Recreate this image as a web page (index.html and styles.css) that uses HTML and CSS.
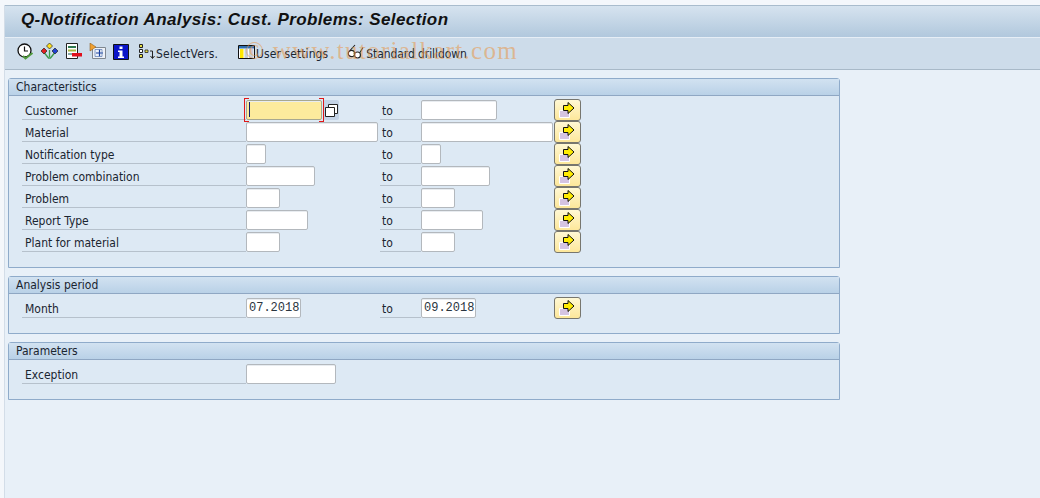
FILE: index.html
```html
<!DOCTYPE html>
<html lang="en">
<head>
<meta charset="utf-8">
<title>Q-Notification Analysis</title>
<link rel="stylesheet" href="styles.css">
</head>
<body>
<div class="window">
  <header class="titlebar"><h1>Q-Notification Analysis: Cust. Problems: Selection</h1></header>
  <nav class="toolbar">
    <span class="tool first"><svg width="17" height="17" viewBox="0 0 17 17"><circle cx="7.5" cy="7.5" r="6.5" fill="#fff" stroke="#111" stroke-width="1.3"/><path d="M7.5 3.500v4.500h3.500" fill="none" stroke="#111" stroke-width="1.200"/><path d="M6 13l2.500 2.500 7-5.500" fill="none" stroke="#4f9a3c" stroke-width="2"/></svg></span>
    <span class="tool"><svg width="17" height="17" viewBox="0 0 17 17"><path d="M8.500 7v7M3.500 10l4 5h2l4-5" fill="none" stroke="#3a9a4a" stroke-width="1.300"/><path d="M8.500 0l3 3-3 3-3-3z" fill="#ffe020" stroke="#222" stroke-width=".7"/><path d="M3 5l3 3-3 3-3-3z" fill="#e02020" stroke="#222" stroke-width=".7"/><path d="M14 5l3 3-3 3-3-3z" fill="#2040d0" stroke="#222" stroke-width=".7"/></svg></span>
    <span class="tool"><svg width="17" height="17" viewBox="0 0 17 17"><path d="M1.500.5h11v15h-11z" fill="#fff" stroke="#222"/><path d="M3 3h8v2H3z" fill="#2f7a50"/><path d="M3 6.500h8v2H3z" fill="#a8b840"/><path d="M3 10h4v2H3z" fill="#8aa"/><path d="M7 10h10v3.500H7z" fill="#e0101c"/></svg></span>
    <span class="tool"><svg width="17" height="17" viewBox="0 0 17 17"><path d="M3.500 4.500h13v11h-13z" fill="#eef2f8" stroke="#808890"/><path d="M7 10h7M10.500 6.500v7" stroke="#1840a0" stroke-width="1.200"/><path d="M6 6.500h7v7H6z" fill="none" stroke="#5878b0" stroke-width=".7"/><path d="M1 0l6 4-6 4z" fill="#f0a030" stroke="#805010" stroke-width=".5"/></svg></span>
    <span class="tool"><svg width="16" height="16" viewBox="0 0 16 16"><path d="M.5.500h15v15H.5z" fill="#0a14c8" stroke="#111"/><path d="M6.500 2.500h3v2.500h-3zM5 6.500h4.500v6H11v1.500H5v-1.500h1.500V8H5z" fill="#fff"/></svg></span>
    <span class="tool labelled select"><svg width="17" height="17" viewBox="0 0 17 17"><path d="M1.500 1.500h3v3h-3zM1.500 11.500h3v3h-3z" fill="#e8e040" stroke="#222"/><path d="M1.500 6.500h3v3h-3z" fill="#fff" stroke="#222"/><path d="M7 7h3v2.500H7z" fill="#e8e040" stroke="#222" stroke-width=".8"/><path d="M12 8h2.500v7M12.500 13l2 2.500 2-2.500" fill="none" stroke="#222"/></svg><span>SelectVers.</span></span>
    <span class="tool labelled user"><svg width="17" height="16" viewBox="0 0 17 16"><path d="M.5 1.500h16v13H.5z" fill="#fff" stroke="#111"/><path d="M1 2h15v2.500H1z" fill="#2f6fb0"/><path d="M2 5h3.500v9H2z" fill="#ffe800"/><path d="M6.500 5H10v9H6.500zM11 5h4.500v9H11z" fill="#c8d0da"/></svg><span>User settings</span></span>
    <span class="tool labelled drill"><svg width="17" height="15" viewBox="0 0 17 15"><circle cx="4.500" cy="9.500" r="3.200" fill="#fff" stroke="#222" stroke-width="1.200"/><circle cx="10.500" cy="11" r="3" fill="#fff" stroke="#222" stroke-width="1.200"/><path d="M3 6.500L8 1M13 8.500l3-5M7.500 10l-.5-1" fill="none" stroke="#222" stroke-width="1.100"/></svg><span>Standard drilldown</span></span>
    <span class="watermark">© www.tutorialkart.com</span>
  </nav>
  <main class="content">
    <section class="group g-char">
      <h2>Characteristics</h2>
      <div class="rows">
        <div class="row">
          <label>Customer</label>
          <div class="cell">
            <span class="focus-wrap"><span class="field focus w76"><i class="caret"></i></span></span>
            <span class="f4"><svg width="13" height="13" viewBox="0 0 13 13"><path d="M3.500.5h9v9h-9z" fill="#fff" stroke="#222"/><path d="M.5 3.500h9v9h-9z" fill="#fff" stroke="#222"/></svg></span>
          </div>
          <span class="to">to</span>
          <div class="cell2"><span class="field w76"></span></div>
          <button class="more" type="button"><svg width="19" height="17" viewBox="0 0 19 17"><path d="M1.500 8.500h10v7h-10z" fill="#d5c4e2" stroke="#fff"/><path d="M5.500 3.500H10V.5l6 5.500-6 5.500V8.500H5.500z" fill="#ffec00" stroke="#111"/></svg></button>
        </div>
        <div class="row">
          <label>Material</label>
          <div class="cell"><span class="field w132"></span></div>
          <span class="to">to</span>
          <div class="cell2"><span class="field w132"></span></div>
          <button class="more" type="button"><svg width="19" height="17" viewBox="0 0 19 17"><path d="M1.500 8.500h10v7h-10z" fill="#d5c4e2" stroke="#fff"/><path d="M5.500 3.500H10V.5l6 5.500-6 5.500V8.500H5.500z" fill="#ffec00" stroke="#111"/></svg></button>
        </div>
        <div class="row">
          <label>Notification type</label>
          <div class="cell"><span class="field w20"></span></div>
          <span class="to">to</span>
          <div class="cell2"><span class="field w20"></span></div>
          <button class="more" type="button"><svg width="19" height="17" viewBox="0 0 19 17"><path d="M1.500 8.500h10v7h-10z" fill="#d5c4e2" stroke="#fff"/><path d="M5.500 3.500H10V.5l6 5.500-6 5.500V8.500H5.500z" fill="#ffec00" stroke="#111"/></svg></button>
        </div>
        <div class="row">
          <label>Problem combination</label>
          <div class="cell"><span class="field w69"></span></div>
          <span class="to">to</span>
          <div class="cell2"><span class="field w69"></span></div>
          <button class="more" type="button"><svg width="19" height="17" viewBox="0 0 19 17"><path d="M1.500 8.500h10v7h-10z" fill="#d5c4e2" stroke="#fff"/><path d="M5.500 3.500H10V.5l6 5.500-6 5.500V8.500H5.500z" fill="#ffec00" stroke="#111"/></svg></button>
        </div>
        <div class="row">
          <label>Problem</label>
          <div class="cell"><span class="field w34"></span></div>
          <span class="to">to</span>
          <div class="cell2"><span class="field w34"></span></div>
          <button class="more" type="button"><svg width="19" height="17" viewBox="0 0 19 17"><path d="M1.500 8.500h10v7h-10z" fill="#d5c4e2" stroke="#fff"/><path d="M5.500 3.500H10V.5l6 5.500-6 5.500V8.500H5.500z" fill="#ffec00" stroke="#111"/></svg></button>
        </div>
        <div class="row">
          <label>Report Type</label>
          <div class="cell"><span class="field w62"></span></div>
          <span class="to">to</span>
          <div class="cell2"><span class="field w62"></span></div>
          <button class="more" type="button"><svg width="19" height="17" viewBox="0 0 19 17"><path d="M1.500 8.500h10v7h-10z" fill="#d5c4e2" stroke="#fff"/><path d="M5.500 3.500H10V.5l6 5.500-6 5.500V8.500H5.500z" fill="#ffec00" stroke="#111"/></svg></button>
        </div>
        <div class="row">
          <label>Plant for material</label>
          <div class="cell"><span class="field w34"></span></div>
          <span class="to">to</span>
          <div class="cell2"><span class="field w34"></span></div>
          <button class="more" type="button"><svg width="19" height="17" viewBox="0 0 19 17"><path d="M1.500 8.500h10v7h-10z" fill="#d5c4e2" stroke="#fff"/><path d="M5.500 3.500H10V.5l6 5.500-6 5.500V8.500H5.500z" fill="#ffec00" stroke="#111"/></svg></button>
        </div>
      </div>
    </section>
    <section class="group g-small">
      <h2>Analysis period</h2>
      <div class="rows">
        <div class="row">
          <label>Month</label>
          <div class="cell"><span class="field w55 mono">07.2018</span></div>
          <span class="to">to</span>
          <div class="cell2"><span class="field w55 mono">09.2018</span></div>
          <button class="more" type="button"><svg width="19" height="17" viewBox="0 0 19 17"><path d="M1.500 8.500h10v7h-10z" fill="#d5c4e2" stroke="#fff"/><path d="M5.500 3.500H10V.5l6 5.500-6 5.500V8.500H5.500z" fill="#ffec00" stroke="#111"/></svg></button>
        </div>
      </div>
    </section>
    <section class="group g-small">
      <h2>Parameters</h2>
      <div class="rows">
        <div class="row">
          <label>Exception</label>
          <div class="cell"><span class="field w90"></span></div>
        </div>
      </div>
    </section>
  </main>
</div>
</body>
</html>
```
FILE: styles.css
```css
* { box-sizing: border-box; }
html, body { margin: 0; height: 498px; overflow: hidden; }
body {
  background: #f4f7fb;
  font-family: "DejaVu Sans", "Noto Sans", sans-serif;
  font-stretch: condensed;
  font-size: 12px;
  color: #1a2530;
  padding: 5px 0 0 4px;
}
.window {
  height: 493px;
  display: flex;
  flex-direction: column;
  border-left: 1px solid #d3dde8;
  background: #e8f0f8;
}
.titlebar {
  height: 32px;
  flex: none;
  background: linear-gradient(#d6e3ef, #b1c8dd);
  border-top: 1px solid #a9bccd;
  padding: 4px 0 0 16px;
}
h1 {
  margin: 0;
  font-family: "Liberation Sans", Arial, sans-serif;
  font-style: italic;
  font-weight: 700;
  font-stretch: normal;
  font-size: 17px;
  line-height: 20px;
  letter-spacing: .4px;
  color: #111;
}
.toolbar {
  position: relative;
  height: 33px;
  flex: none;
  background: #cddcea;
  border-top: 1px solid #e6eef6;
  border-bottom: 1px solid #a8b9c8;
  display: flex;
  align-items: center;
  padding-left: 12px;
}
.tool { display: flex; align-items: center; width: 24px; }
.tool svg { flex: none; margin-top: -4px; }
.labelled { width: auto; }
.labelled span { padding-left: 1px; }
.select { margin-left: 1px; }
.select span { letter-spacing: .2px; }
.user { margin-left: 20px; }
.user span { letter-spacing: .08px; }
.drill { margin-left: 19px; }
.drill span { padding-left: 2px; letter-spacing: -.08px; }
.watermark {
  position: absolute;
  left: 240px;
  top: -1px;
  font-family: "Liberation Serif", serif;
  font-stretch: normal;
  font-size: 25px;
  letter-spacing: 1.3px;
  white-space: nowrap;
  color: rgba(232, 150, 70, .55);
}
.content {
  flex: 1;
  padding: 8px 0 0 3px;
  display: flex;
  flex-direction: column;
  gap: 8px;
}
.group {
  width: 832px;
  background: #dde9f4;
  border: 1px solid #8fabca;
  border-top-left-radius: 3px;
  border-top-right-radius: 3px;
}
.g-char { height: 190px; }
.g-small { height: 58px; }
h2 {
  margin: 0;
  height: 17px;
  padding-left: 7px;
  font-size: 12px;
  font-weight: 400;
  line-height: 16px;
  background: linear-gradient(#d2e2f1, #b9d1e7);
  border-bottom: 1px solid #8fa7c3;
}
.rows {
  padding: 4px 0 0 13px;
  display: flex;
  flex-direction: column;
  gap: 2px;
}
.row { display: flex; height: 20px; }
label {
  width: 224px;
  flex: none;
  padding-left: 3px;
  line-height: 23px;
  border-bottom: 1px solid #b6c1cc;
}
.cell { width: 134px; flex: none; display: flex; align-items: flex-start; }
.cell2 { width: 133px; flex: none; }
.to {
  width: 41px;
  flex: none;
  padding-left: 2px;
  line-height: 23px;
  border-bottom: 1px solid #b6c1cc;
}
.field {
  display: block;
  height: 20px;
  background: #fff;
  border: 1px solid #b3b8bd;
  border-radius: 2px;
  box-shadow: inset 0 1px 0 #e8ecf0;
}
.mono {
  font-family: "Liberation Mono", monospace;
  font-stretch: normal;
  font-size: 12px;
  line-height: 19px;
  padding-left: 2px;
  color: #2a3540;
}
.focus-wrap {
  position: relative;
  display: block;
}
.focus-wrap::before, .focus-wrap::after {
  content: "";
  position: absolute;
  top: -2px;
  bottom: -2px;
  width: 4px;
  border: 1px solid #e01818;
}
.focus-wrap::before { left: -2px; border-right: 0; }
.focus-wrap::after { right: -2px; border-left: 0; }
.focus { background: #fdeb9d; border-color: #a8a890; }
.caret { display: block; width: 1px; height: 15px; margin: 1px 0 0 2px; background: #10206a; }
.f4 {
  width: 16px; height: 20px;
  margin: 0 0 0 1px;
  display: flex; align-items: center; justify-content: center;
  background: #c3d3e6;
  border-radius: 2px;
}
.w20 { width: 20px; }
.w34 { width: 34px; }
.w55 { width: 55px; }
.w62 { width: 62px; }
.w69 { width: 69px; }
.w76 { width: 76px; }
.w90 { width: 90px; }
.w132 { width: 132px; }
.more {
  width: 27px;
  height: 22px;
  margin-top: -1px;
  padding: 0;
  flex: none;
  display: flex;
  align-items: center;
  justify-content: center;
  background: linear-gradient(#fff8d4, #fde79a);
  border: 1px solid #77766e;
  border-radius: 3px;
}
```
